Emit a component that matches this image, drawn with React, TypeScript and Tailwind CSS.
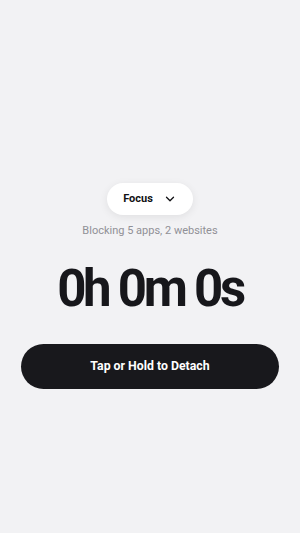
import { ChevronDown } from 'lucide-react'

export default function App() {
  return (
    <div className="min-h-screen bg-[#f2f2f4] flex flex-col items-center pt-[183px] font-['Roboto',sans-serif]">
      {/* Mode picker */}
      <button className="flex items-center gap-[10px] h-[32px] px-[16px] rounded-full bg-white shadow-[0_2px_8px_rgba(0,0,0,0.08)]">
        <span className="text-[11px] font-bold text-[#111114]">Focus</span>
        <ChevronDown className="h-[14px] w-[14px] text-[#111114]" strokeWidth={2.2} />
      </button>
      <p className="mt-[8px] text-[11px] text-[#909096]">Blocking 5 apps, 2 websites</p>

      {/* Timer */}
      <h1 className="mt-[19px] text-[51px] leading-[60px] font-bold text-[#17171b] tracking-[-3.3px]">0h 0m 0s</h1>

      {/* Detach button */}
      <div className="w-full px-[21px] mt-[25px]">
        <button className="w-full h-[45px] rounded-full bg-[#18181c] text-white text-[12.3px] font-bold">
          Tap or Hold to Detach
        </button>
      </div>
    </div>
  )
}
